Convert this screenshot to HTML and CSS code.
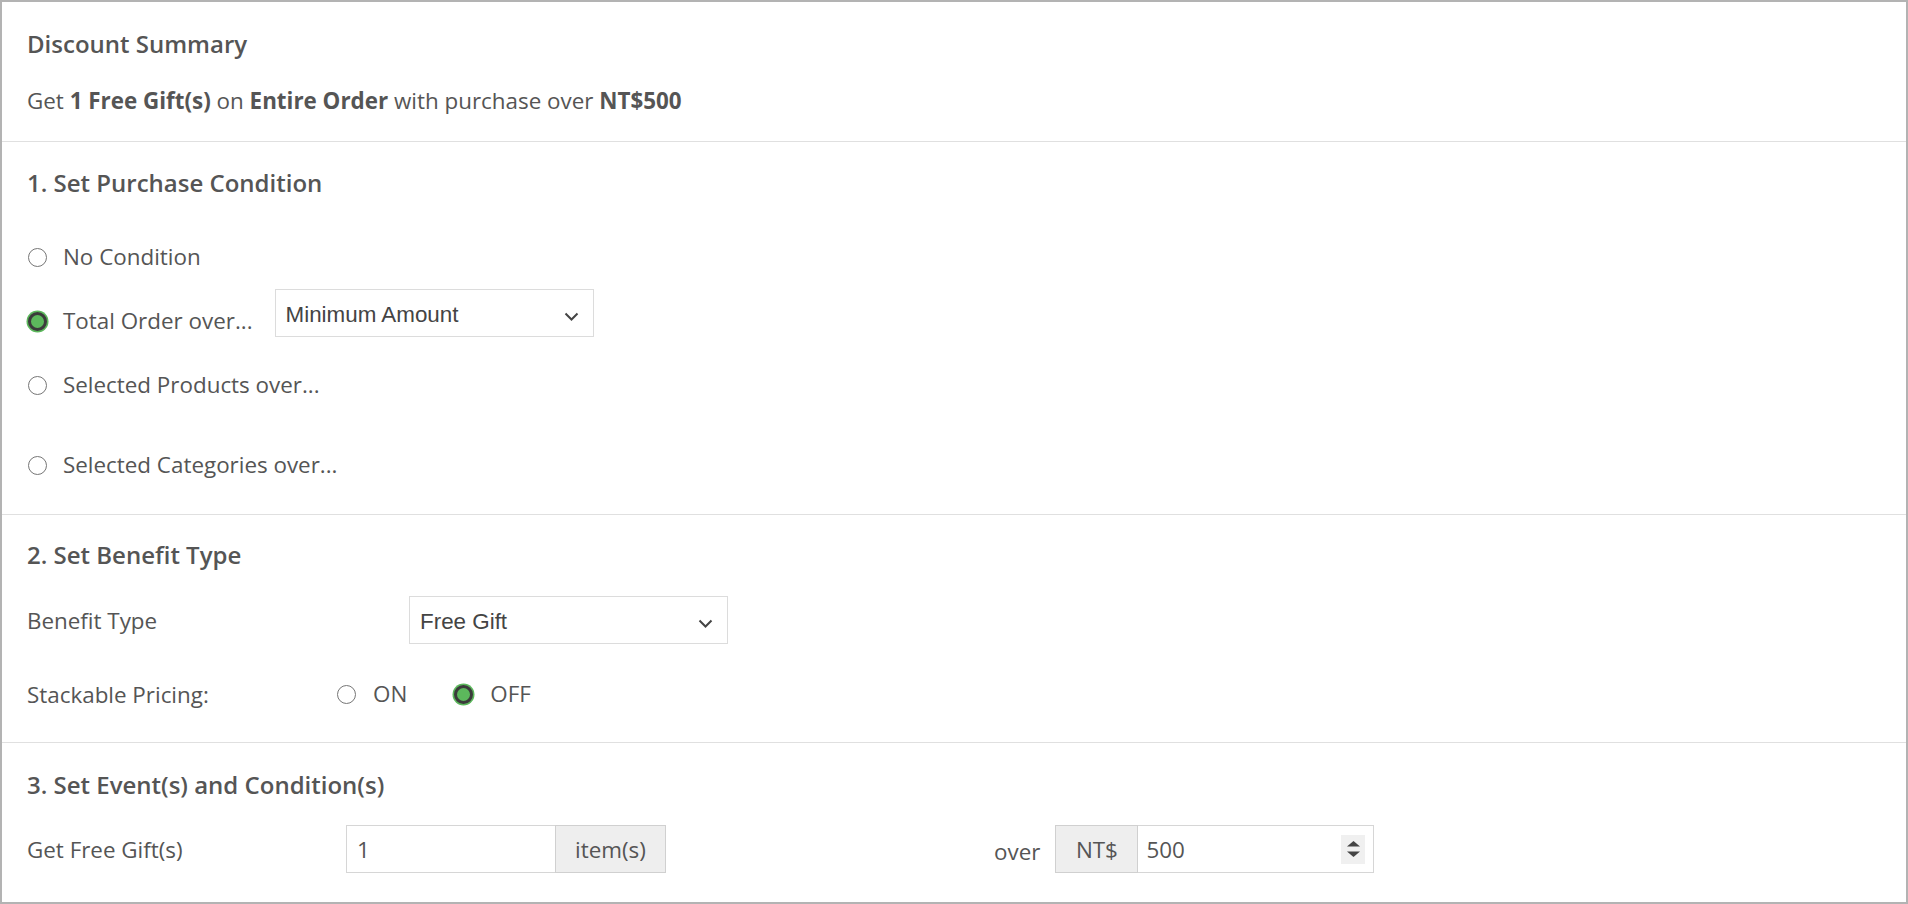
FILE: index.html
```html
<!DOCTYPE html>
<html lang="en">
<head>
    <meta charset="UTF-8">
    <meta name="viewport" content="width=device-width, initial-scale=1.0">
    <title>Discount Settings</title>
    <link rel="stylesheet" href="styles.css">
</head>
<body>
    <div class="panel">
        <!-- summary -->
        <div class="section section-summary">
            <h2 class="section-title">Discount Summary</h2>
            <p class="summary-text">Get <b>1 Free Gift(s)</b> on <b>Entire Order</b> with purchase over <b>NT$500</b></p>
        </div>

        <!-- step 1 -->
        <div class="section section-condition">
            <h2 class="section-title">1. Set Purchase Condition</h2>
            <div class="radio-list">
                <label class="radio-row">
                    <span class="radio"></span>
                    <span class="radio-label">No Condition</span>
                </label>
                <label class="radio-row">
                    <span class="radio checked"></span>
                    <span class="radio-label">Total Order over...</span>
                    <div class="select-box cond-select">
                        <span>Minimum Amount</span>
                        <svg class="chevron" width="15" height="9" viewBox="0 0 15 9"><path d="M1.5 1.5 L7.5 7.5 L13.5 1.5" fill="none" stroke="#444" stroke-width="2"/></svg>
                    </div>
                </label>
                <label class="radio-row row-spaced">
                    <span class="radio"></span>
                    <span class="radio-label">Selected Products over...</span>
                </label>
                <label class="radio-row">
                    <span class="radio"></span>
                    <span class="radio-label">Selected Categories over...</span>
                </label>
            </div>
        </div>

        <!-- step 2 -->
        <div class="section section-benefit">
            <h2 class="section-title">2. Set Benefit Type</h2>
            <div class="form-row">
                <span class="field-label label-benefit">Benefit Type</span>
                <div class="select-box benefit-select">
                    <span>Free Gift</span>
                    <svg class="chevron" width="15" height="9" viewBox="0 0 15 9"><path d="M1.5 1.5 L7.5 7.5 L13.5 1.5" fill="none" stroke="#444" stroke-width="2"/></svg>
                </div>
            </div>
            <div class="form-row row-gap">
                <span class="field-label label-stack">Stackable Pricing:</span>
                <label class="inline-radio">
                    <span class="radio"></span>
                    <span class="radio-label">ON</span>
                </label>
                <label class="inline-radio">
                    <span class="radio checked"></span>
                    <span class="radio-label">OFF</span>
                </label>
            </div>
        </div>

        <!-- step 3 -->
        <div class="section section-event">
            <h2 class="section-title">3. Set Event(s) and Condition(s)</h2>
            <div class="form-row">
                <span class="field-label label-gift">Get Free Gift(s)</span>
                <div class="input-group">
                    <div class="text-input gift-input">1</div>
                    <div class="addon addon-items">item(s)</div>
                </div>
                <span class="over-text">over</span>
                <div class="input-group">
                    <div class="addon addon-currency">NT$</div>
                    <div class="text-input amount-input">
                        <span>500</span>
                        <span class="spinner">
                            <svg width="13" height="18" viewBox="0 0 13 18"><path d="M6.5 1 L13 6.5 L0 6.5 Z" fill="#444"/><path d="M0 11.5 L13 11.5 L6.5 17 Z" fill="#444"/></svg>
                        </span>
                    </div>
                </div>
            </div>
        </div>
    </div>
</body>
</html>
```

FILE: styles.css
```css
* {
    box-sizing: border-box;
}

body {
    margin: 0;
    font-family: "Open Sans", Arial, sans-serif;
    color: #555;
    background-color: #fff;
}

.panel {
    height: 904px;
    border: 2px solid #b3b3b3;
}

.section {
    padding-left: 25px;
    padding-right: 25px;
    border-top: 1px solid #e0e0e0;
}

.section-summary {
    border-top: none;
    padding-top: 27px;
    padding-bottom: 25px;
}

.section-condition {
    padding-top: 26px;
    padding-bottom: 25px;
}

.section-benefit {
    padding-top: 25px;
    padding-bottom: 24px;
}

.section-event {
    padding-top: 27px;
    padding-bottom: 29px;
}

.section-title {
    margin: 0;
    font-size: 24px;
    font-weight: 600;
    line-height: 30px;
    color: #555;
}

.section-summary .section-title {
    margin-bottom: 27px;
}

.section-condition .section-title {
    margin-bottom: 35px;
}

.section-benefit .section-title {
    margin-bottom: 26px;
}

.section-event .section-title {
    margin-bottom: 25px;
}

.summary-text {
    margin: 0;
    font-size: 22.4px;
    line-height: 30px;
}

.summary-text b {
    font-weight: 700;
}

/* radios */
.radio-list {
    display: flex;
    flex-direction: column;
    gap: 16px;
}

.radio-row {
    display: flex;
    align-items: center;
    height: 48px;
    font-size: 22.4px;
}

.row-spaced {
    margin-bottom: 16px;
}

.radio {
    width: 19px;
    height: 19px;
    border-radius: 50%;
    border: 1px solid #767676;
    background-color: #fff;
    flex-shrink: 0;
    margin-left: 1px;
    margin-right: 16px;
}

.radio.checked {
    background-color: #5cb85c;
    border: 3px solid #3b3b3b;
    box-shadow: 0 0 0 1.5px #5cb85c;
}

.radio-label {
    line-height: 30px;
}

/* selects */
.select-box {
    display: flex;
    align-items: center;
    justify-content: space-between;
    height: 48px;
    padding: 4px 14px 0 10px;
    border: 1px solid #dcdcdc;
    background-color: #fff;
    font-family: "Liberation Sans", Arial, sans-serif;
    font-size: 22.4px;
    color: #444;
}

.chevron {
    margin-top: 2px;
}

.cond-select {
    width: 319px;
    margin: -8px 0 8px 22px;
}

.benefit-select {
    width: 319px;
}

/* form rows */
.form-row {
    display: flex;
    align-items: center;
    height: 48px;
    font-size: 22.4px;
}

.row-gap {
    margin-top: 26px;
}

.field-label {
    flex-shrink: 0;
}

.label-benefit {
    width: 382px;
}

.label-stack {
    width: 309px;
}

.label-gift {
    width: 319px;
}

.inline-radio {
    display: flex;
    align-items: center;
    margin-right: 46px;
}

.inline-radio .radio {
    margin-right: 17px;
}

/* inputs */
.input-group {
    display: flex;
    height: 48px;
}

.text-input {
    display: flex;
    align-items: center;
    justify-content: space-between;
    height: 48px;
    border: 1px solid #d6d6d6;
    padding: 0 8px 0 10px;
    background-color: #fff;
    color: #555;
}

.gift-input {
    width: 209px;
    border-right: none;
}

.amount-input {
    width: 236px;
    border-left: none;
    padding-left: 8px;
}

.addon {
    display: flex;
    align-items: center;
    justify-content: center;
    height: 48px;
    background-color: #eee;
    border: 1px solid #d0d0d0;
    color: #555;
}

.addon-items {
    width: 111px;
}

.addon-currency {
    width: 83px;
}

.over-text {
    margin-left: 328px;
    margin-right: 15px;
    padding-top: 5px;
}

.spinner {
    display: flex;
    align-items: center;
    justify-content: center;
    width: 24px;
    height: 29px;
    background-color: #f0f0f0;
}
```
